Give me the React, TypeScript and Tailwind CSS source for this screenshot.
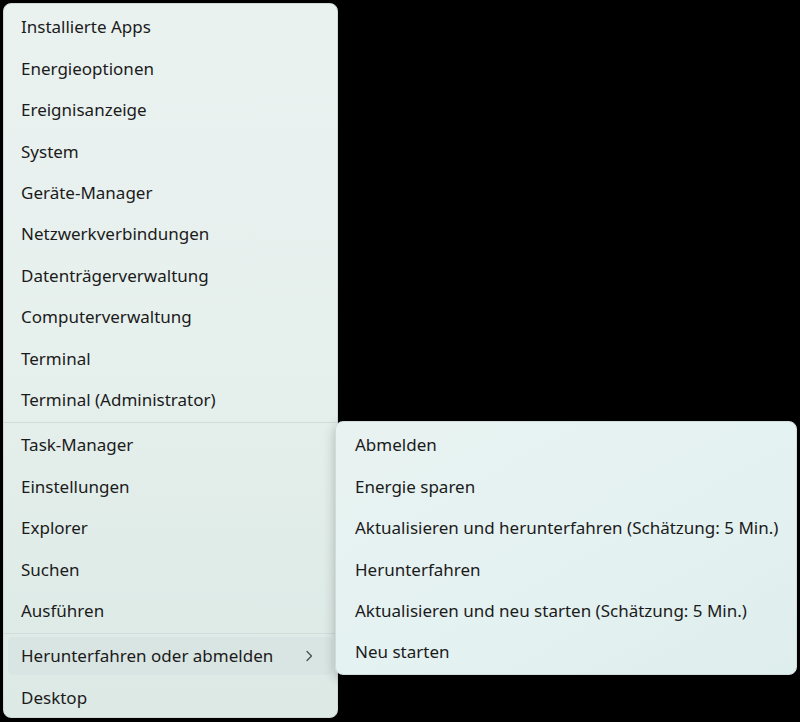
import React from 'react';

const topItems = [
  'Installierte Apps',
  'Energieoptionen',
  'Ereignisanzeige',
  'System',
  'Geräte-Manager',
  'Netzwerkverbindungen',
  'Datenträgerverwaltung',
  'Computerverwaltung',
  'Terminal',
  'Terminal (Administrator)',
];

const midItems = ['Task-Manager', 'Einstellungen', 'Explorer', 'Suchen', 'Ausführen'];

const powerItems = [
  'Abmelden',
  'Energie sparen',
  'Aktualisieren und herunterfahren (Schätzung: 5 Min.)',
  'Herunterfahren',
  'Aktualisieren und neu starten (Schätzung: 5 Min.)',
  'Neu starten',
];

function MenuItem({ label, active, submenu, pad = 'px-[13px]' }: { label: string; active?: boolean; submenu?: boolean; pad?: string }) {
  return (
    <div className="h-[41.4px] shrink-0 px-[4px] py-[2px]">
      <div
        className={`flex h-full items-center justify-between whitespace-nowrap rounded-[5px] ${pad} ${
          active ? 'bg-[#d9e5e2]' : ''
        }`}
      >
        <span>{label}</span>
        {submenu && (
          <svg width="8" height="12" viewBox="0 0 8 12" className="mr-[7px]">
            <path d="M2 1.5 L6.5 6 L2 10.5" fill="none" stroke="#4a4f4e" strokeWidth="1.3" strokeLinecap="round" strokeLinejoin="round" />
          </svg>
        )}
      </div>
    </div>
  );
}

function Separator() {
  return <div className="my-[1.5px] h-px shrink-0 bg-[#d3dcd9]" />;
}

export default function App() {
  return (
    <div
      className="relative h-[722px] w-[800px] overflow-hidden bg-black text-[17px] text-[#1b1b1b]"
      style={{ fontFamily: '"Noto Sans", "Open Sans", sans-serif' }}
    >
      <div className="absolute left-[3px] top-[3px] flex h-[715px] w-[335px] flex-col overflow-hidden rounded-[8px] border border-[#cfdad7] bg-gradient-to-b from-[#eaf2f0] via-[#e6f0ed] to-[#dce9e5] pt-[2.5px]">
        {topItems.map((l) => (
          <MenuItem key={l} label={l} />
        ))}
        <Separator />
        {midItems.map((l) => (
          <MenuItem key={l} label={l} />
        ))}
        <Separator />
        <MenuItem label="Herunterfahren oder abmelden" active submenu />
        <MenuItem label="Desktop" />
      </div>

      <div className="absolute left-[335px] top-[421px] flex h-[254px] w-[462px] flex-col overflow-hidden rounded-[8px] border border-[#cfdcdb] bg-gradient-to-br from-[#e8f2f1] via-[#e5f2f2] to-[#deeeec] pt-[2.5px] shadow-[0_4px_12px_rgba(0,0,0,0.25)]">
        {powerItems.map((l) => (
          <MenuItem key={l} label={l} pad="px-[15px]" />
        ))}
      </div>
    </div>
  );
}
